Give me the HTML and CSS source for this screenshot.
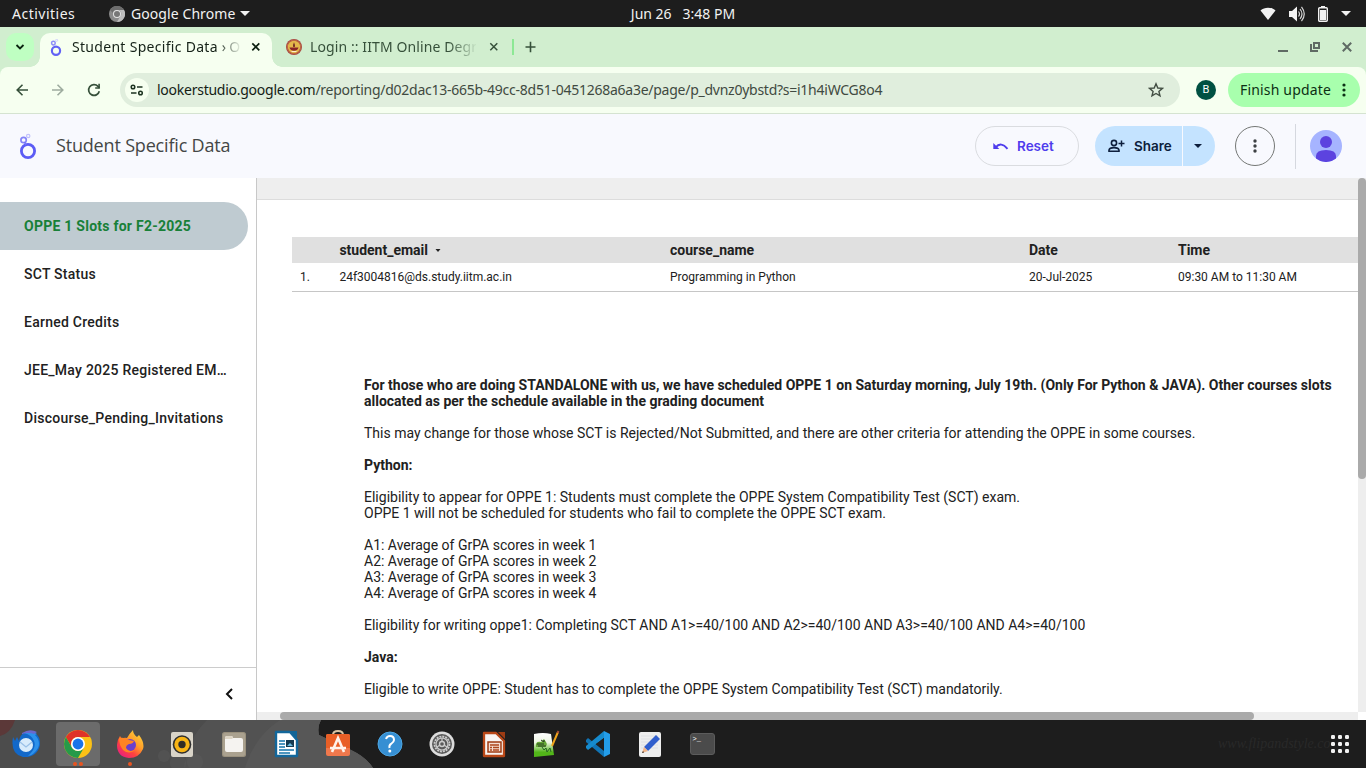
FILE: index.html
```html
<!DOCTYPE html>
<html lang="en">
<head>
<meta charset="utf-8">
<title>Student Specific Data</title>
<link rel="stylesheet" href="styles.css">
</head>
<body>
<div class="desktop">
  <div class="topbar">
    <div class="top-left">
      <span class="activities">Activities</span>
      <svg class="app-icon" width="16" height="16" viewBox="0 0 16 16"><circle cx="8" cy="8" r="8" fill="#8b8b8b"/><path d="M8 0a8 8 0 0 1 7 4H8a4 4 0 0 0-4 3L1 4a8 8 0 0 1 7-4z" fill="#6d6d6d"/><path d="M15 4a8 8 0 0 1-7 12l3.500-6A4 4 0 0 0 10 4z" fill="#bdbdbd"/><circle cx="8" cy="8" r="4" fill="#e4e4e4"/><circle cx="8" cy="8" r="3" fill="#777"/></svg>
      <span class="app-name">Google Chrome</span>
      <svg class="caret" width="10" height="5" viewBox="0 0 10 5"><path d="M0 0h10L5 5z" fill="#f2f2f2"/></svg>
    </div>
    <div class="clock">Jun 26 &nbsp; 3:48 PM</div>
    <div class="tray">
      <svg width="16" height="14" viewBox="0 0 16 14"><path d="M.5 3.500C4.500-.3 11.500-.3 15.500 3.500L8 13z" fill="#f2f2f2"/></svg>
      <svg width="16" height="16" viewBox="0 0 16 16"><path d="M0 5h3l5-4.500v15L3 11H0z" fill="#f2f2f2"/><path d="M9.500 5.500q2 2.500 0 5M11 3q4 5 0 10M12.500.8q5.500 7.200 0 14.400" fill="none" stroke="#d5d5d5" stroke-width="1.200"/></svg>
      <svg width="10" height="16" viewBox="0 0 10 16"><path d="M3 0h4v2H3z" fill="#f2f2f2"/><rect x=".7" y="1.700" width="8.600" height="13.600" rx="1" fill="none" stroke="#f2f2f2" stroke-width="1.400"/><path d="M2 4h6v10H2z" fill="#f2f2f2"/></svg>
      <svg width="10" height="5" viewBox="0 0 10 5"><path d="M0 0h10L5 5z" fill="#f2f2f2"/></svg>
    </div>
  </div>

  <div class="tabstrip">
    <div class="tab-search"><svg width="10" height="6" viewBox="0 0 10 6"><path d="M1.500 1L5 4.500 8.500 1" fill="none" stroke="#0a2410" stroke-width="1.800"/></svg></div>
    <div class="tab active">
      <svg class="fav looker" width="12" height="17" viewBox="0 0 16 26"><circle cx="8" cy="18" r="6.300" fill="none" stroke="#6262f5" stroke-width="3.300"/><circle cx="4" cy="6.300" r="2.800" fill="none" stroke="#8e8ef8" stroke-width="2.200"/><circle cx="9" cy="2" r="1.600" fill="none" stroke="#c7c7ff" stroke-width="1.200"/></svg>
      <span class="tab-title t1">Student Specific Data <span class="crumb">›</span> O</span>
      <svg class="close" width="10" height="10" viewBox="0 0 10 10"><path d="M1.300 1.300l7 7M8.300 1.300l-7 7" stroke="#0c1f10" stroke-width="1.700"/></svg>
    </div>
    <div class="tab second">
      <svg class="fav" width="16" height="16" viewBox="0 0 16 16"><circle cx="8" cy="8" r="8" fill="#a4403f"/><circle cx="8" cy="8" r="6.200" fill="#e3b64a"/><circle cx="8" cy="8" r="6.900" fill="none" stroke="#d2894a" stroke-width=".6"/><path d="M3.500 8.500h9q-1 3.200-4.500 3.200T3.500 8.500z" fill="#8a2326"/><path d="M8 3.300q1.500 3 .8 4.700H7.200Q6.500 6.300 8 3.300z" fill="#742a27"/><path d="M5.500 12.500h5" stroke="#fff0ce"/></svg>
      <span class="tab-title t2">Login :: IITM Online Degr</span>
      <svg class="close" width="10" height="10" viewBox="0 0 10 10"><path d="M1.300 1.300l7 7M8.300 1.300l-7 7" stroke="#36503a" stroke-width="1.500"/></svg>
    </div>
    <div class="tab-sep"></div>
    <svg class="newtab" width="12" height="12" viewBox="0 0 12 12"><path d="M5.500.7v10.600M.5 6h10" stroke="#36503a" stroke-width="1.600"/></svg>
    <div class="win-controls">
      <svg width="10" height="12" viewBox="0 0 10 12"><path d="M0 10h10" stroke="#5f6a64" stroke-width="2"/></svg>
      <svg width="10" height="10" viewBox="0 0 10 10"><path d="M4 1h5v5H4z M1 2v7h7" fill="none" stroke="#5f6a64" stroke-width="2"/></svg>
      <svg width="10" height="10" viewBox="0 0 10 10"><path d="M.8.800l8.400 8.400M9.200.800L.8 9.200" stroke="#5f6a64" stroke-width="2"/></svg>
    </div>
  </div>

  <div class="toolbar">
    <svg width="12" height="12" viewBox="0 0 12 12"><path d="M12 6H1.500M6.500.7L1.200 6l5.300 5.300" fill="none" stroke="#36503a" stroke-width="1.600"/></svg>
    <svg class="fwd" width="12" height="12" viewBox="0 0 12 12"><path d="M0 6h10.500M5.500.7L10.800 6l-5.300 5.300" fill="none" stroke="#9eac9f" stroke-width="1.600"/></svg>
    <svg class="reload" width="14" height="14" viewBox="0 0 14 14"><path d="M12.300 8.300A5.400 5.400 0 1 1 11 3.300l1.500 1.500" fill="none" stroke="#36503a" stroke-width="1.700"/><path d="M12.900.8v5H8.200V4.200h3.100V.8z" fill="#36503a"/></svg>
    <div class="omnibox">
      <div class="site-info"><svg width="14" height="12" viewBox="0 0 14 12"><circle cx="3" cy="3" r="1.800" fill="none" stroke="#1c3320" stroke-width="1.500"/><circle cx="10.500" cy="9" r="1.800" fill="none" stroke="#1c3320" stroke-width="1.500"/><path d="M7 3h5.500M1 9h5.500" stroke="#1c3320" stroke-width="1.500"/></svg></div>
      <span class="url"><b>lookerstudio.google.com</b>/reporting/d02dac13-665b-49cc-8d51-0451268a6a3e/page/p_dvnz0ybstd?s=i1h4iWCG8o4</span>
      <svg class="star" width="16" height="16" viewBox="0 0 16 16"><path d="M8 1.800l1.800 4.200 4.600.4-3.500 3 1.100 4.500L8 11.500l-4 2.400 1.100-4.500-3.500-3L6.200 6z" fill="none" stroke="#424e43" stroke-width="1.400"/></svg>
    </div>
    <div class="profile">B</div>
    <div class="update"><span>Finish update</span><svg width="4" height="14" viewBox="0 0 4 14"><g fill="#0c3014"><circle cx="2" cy="2" r="1.600"/><circle cx="2" cy="7" r="1.600"/><circle cx="2" cy="12" r="1.600"/></g></svg></div>
  </div>

  <header class="app-header">
    <svg class="logo" width="16" height="26" viewBox="0 0 16 26"><circle cx="8" cy="18" r="6.600" fill="none" stroke="#5c5cf5" stroke-width="2.800"/><circle cx="3.600" cy="7" r="2.700" fill="none" stroke="#8585f8" stroke-width="1.700"/><path d="M4.500 9l1.500 3" stroke="#7373f7" stroke-width="1.500"/><circle cx="8.200" cy="3" r="1.700" fill="none" stroke="#c1c1fc" stroke-width="1.200"/></svg>
    <h1>Student Specific Data</h1>
    <div class="reset"><svg width="16" height="9" viewBox="0 0 16 9"><path d="M2.500 5.500Q8-1 14.500 6.800" fill="none" stroke="#4f3ded" stroke-width="1.900"/><path d="M.3 1v6h6z" fill="#4f3ded"/></svg><span>Reset</span></div>
    <div class="share">
      <div class="share-main"><svg width="17" height="14" viewBox="0 0 17 14"><circle cx="6" cy="4" r="2.600" fill="none" stroke="#0d1e3c" stroke-width="1.600"/><path d="M1 12.200v-1Q1.500 8.600 6 8.600t5 2.600v1z" fill="none" stroke="#0d1e3c" stroke-width="1.600"/><path d="M13.500 1.500v6M10.500 4.500h6" stroke="#0d1e3c" stroke-width="1.500"/></svg><span>Share</span></div>
      <div class="share-drop"><svg width="8" height="4" viewBox="0 0 8 4"><path d="M0 0h8L4 4z" fill="#0d1e3c"/></svg></div>
    </div>
    <div class="more"><svg width="4" height="14" viewBox="0 0 4 14"><g fill="#3c4043"><circle cx="2" cy="2" r="1.700"/><circle cx="2" cy="7" r="1.700"/><circle cx="2" cy="12" r="1.700"/></g></svg></div>
    <div class="divider"></div>
    <svg class="avatar" width="32" height="32" viewBox="0 0 32 32"><circle cx="16" cy="16" r="16" fill="#a6b4ff"/><circle cx="16" cy="12" r="6" fill="#5c43df"/><path d="M6 28.500v-2.500Q6 20 16 20t10 6v2.500A16 16 0 0 1 6 28.500z" fill="#5c43df"/></svg>
  </header>

  <main class="workspace">
    <nav class="sidebar">
      <ul>
        <li class="selected">OPPE 1 Slots for F2-2025</li>
        <li>SCT Status</li>
        <li>Earned Credits</li>
        <li>JEE_May 2025 Registered EM…</li>
        <li>Discourse_Pending_Invitations</li>
      </ul>
      <div class="collapse"><svg width="8" height="12" viewBox="0 0 8 12"><path d="M7 1L2 6l5 5" fill="none" stroke="#111" stroke-width="2"/></svg></div>
    </nav>
    <section class="canvas">
      <div class="report">
        <div class="table">
          <div class="row head"><span></span><span>student_email <svg width="6" height="4" viewBox="0 0 6 4"><path d="M.5 0h5L3 3z" fill="#222"/></svg></span><span>course_name</span><span>Date</span><span>Time</span></div>
          <div class="row"><span class="num">1.</span><span>24f3004816@ds.study.iitm.ac.in</span><span>Programming in Python</span><span>20-Jul-2025</span><span>09:30 AM to 11:30 AM</span></div>
        </div>
        <div class="notes"><b>For those who are doing STANDALONE with us, we have scheduled OPPE 1 on Saturday morning, July 19th. (Only For Python &amp; JAVA). Other courses slots<br>allocated as per the schedule available in the grading document</b><br><br>This may change for those whose SCT is Rejected/Not Submitted, and there are other criteria for attending the OPPE in some courses.<br><br><b>Python:</b><br><br>Eligibility to appear for OPPE 1: Students must complete the OPPE System Compatibility Test (SCT) exam.<br>OPPE 1 will not be scheduled for students who fail to complete the OPPE SCT exam.<br><br>A1: Average of GrPA scores in week 1<br>A2: Average of GrPA scores in week 2<br>A3: Average of GrPA scores in week 3<br>A4: Average of GrPA scores in week 4<br><br>Eligibility for writing oppe1: Completing SCT AND A1&gt;=40/100 AND A2&gt;=40/100 AND A3&gt;=40/100 AND A4&gt;=40/100<br><br><b>Java:</b><br><br>Eligible to write OPPE: Student has to complete the OPPE System Compatibility Test (SCT) mandatorily.</div>
      </div>
      <div class="vscroll"><div class="vthumb"></div></div>
      <div class="hscroll"><div class="hthumb"></div></div>
      <div class="corner"></div>
    </section>
  </main>

  <footer class="dock">
    <svg class="wallpaper" width="1366" height="48" viewBox="0 0 1366 48"><rect width="1366" height="48" fill="#1d1d1d"/><path d="M0 0h321q-4 7-2 15l32 15q15 7 22 18H0z" fill="#4c4c4c"/><path d="M207 0h114q-4 7-2 15l32 15q15 7 22 18H184q3-28 23-48z" fill="#525252"/><path d="M280 0h41q-4 7-2 15l32 15q15 7 22 18H245q9-31 35-48z" fill="#575757"/><path d="M0 0h15Q11 13 0 16z" fill="#5b3838"/><g fill="#626262" opacity=".3"><circle cx="164" cy="36" r="6"/><circle cx="178" cy="43" r="8"/><circle cx="195" cy="42" r="8"/></g></svg>
    <div class="slot"><svg width="28" height="28" viewBox="0 0 28 28"><path d="M1 7Q-2 24 11 27q14 1 17-12 .5-8-4-11Q18-1 12 3 8 5 7 11L5 7 3 11z" fill="#1268c9"/><path d="M12 3q7-3 13 1l-2 1q6 6 3 13-4 7-10 8 9-8 6-15-2-6-10-8z" fill="#2c91ec"/><path d="M10 3q8-5 15-1l-3 2q-5-2-12 0z" fill="#6968cf"/><circle cx="14" cy="15" r="7" fill="#d7ebfb"/><path d="M8 12l6 5 6-5" fill="none" stroke="#9ac1e7" stroke-width="1.300"/></svg></div>
    <div class="slot current"><svg width="28" height="28" viewBox="0 0 28 28"><circle cx="14" cy="14" r="14" fill="#fbc116"/><path d="M1.880 7A14 14 0 0 1 26.120 7H14a7 7 0 0 0-6.060 10.500z" fill="#df3328"/><path d="M1.880 7A14 14 0 0 0 14 28l6.060-10.500a7 7 0 0 1-12.120 0z" fill="#269a49"/><circle cx="14" cy="14" r="7" fill="#fff"/><circle cx="14" cy="14" r="5.400" fill="#1a73e8"/></svg><i class="dot left"></i><i class="dot right"></i></div>
    <div class="slot"><svg width="28" height="28" viewBox="0 0 28 28"><defs><linearGradient id="fx" x1="1" x2=".2" y2="1"><stop stop-color="#ffe63e"/><stop offset=".45" stop-color="#ff9b29"/><stop offset=".7" stop-color="#ff433e"/><stop offset="1" stop-color="#e91e80"/></linearGradient></defs><path d="M17 0q0 4 4 7l2-2q6 8 4 14-4 9-14 9Q1 27 1 15q0-5 3-9l2 3q2-2 5-1 3-5 6-8z" fill="url(#fx)"/><circle cx="14" cy="15" r="6" fill="#6940cb"/><path d="M3 8q6-1 10 2l5 1q-1 3-5 3-3 1-3 4 3 5 9 2-6 5-12 0-4-5-4-12z" fill="#ff8424"/></svg><i class="dot"></i></div>
    <div class="slot"><svg width="28" height="28" viewBox="0 0 28 28"><rect x="3" y="2" width="22" height="25" rx="2" fill="#d9d4c8"/><circle cx="14" cy="14.500" r="9.300" fill="#2f2f2f"/><circle cx="14" cy="14.500" r="5.700" fill="none" stroke="#f8b414" stroke-width="4"/><circle cx="14" cy="14.500" r="2.500" fill="#322c20"/></svg></div>
    <div class="slot"><svg width="28" height="28" viewBox="0 0 28 28"><rect x="2" y="2" width="24" height="25" rx="2.500" fill="#99907d"/><rect x="3" y="3" width="22" height="23" rx="2" fill="#aaa18f"/><path d="M5 8q0-2 2-2h4q2 0 2 2h8q2 0 2 2v10q0 2-2 2H7q-2 0-2-2z" fill="#f5f3f0"/><path d="M5 9V8q0-2 2-2h4q2 0 2 2l-1 1z" fill="#ded6c6"/></svg></div>
    <div class="slot"><svg width="28" height="28" viewBox="0 0 28 28"><path d="M4 2h14l7 8v16H4z" fill="#fff" stroke="#13679b" stroke-width="2.400" stroke-linejoin="round"/><path d="M18 1h7v8z" fill="#126496"/><path d="M7 11h6M7 14h6M7 17h6M7 20h15M7 23h11" stroke="#1474aa" stroke-width="1.500"/><path d="M14 10h8v7h-8z" fill="#163a50"/><path d="M15 16l3-3 3 3z" fill="#69b8dd"/></svg></div>
    <div class="slot"><svg width="28" height="28" viewBox="0 0 28 28"><path d="M9 5q0-4 5-4t5 4" fill="none" stroke="#d9c4a4" stroke-width="2"/><rect x="2" y="4" width="24" height="22" rx="2" fill="#f0784c"/><path d="M2 6q0-2 2-2h20q2 0 2 2v12H2z" fill="#e95f26"/><path d="M8 22l6-14 6 14M6 18h16" fill="none" stroke="#fff3eb" stroke-width="2.600"/></svg></div>
    <div class="slot"><svg width="28" height="28" viewBox="0 0 28 28"><circle cx="14" cy="14" r="12" fill="#368fd3" stroke="#4da7e3"/><path d="M10 9q1-3 4-3 4 0 4 4 0 2-3 4-2 1-1.500 4" fill="none" stroke="#fff" stroke-width="2"/><circle cx="13.800" cy="21" r="1.500" fill="#fff"/></svg></div>
    <div class="slot"><svg width="28" height="28" viewBox="0 0 28 28"><circle cx="14" cy="14" r="12.500" fill="#ddd"/><circle cx="14" cy="14" r="10" fill="#5a5a5a"/><circle cx="14" cy="14" r="7.500" fill="none" stroke="#ccc" stroke-width="1.800" stroke-dasharray="2 .95"/><circle cx="14" cy="14" r="6" fill="none" stroke="#ccc" stroke-width="1.200"/><circle cx="14" cy="14" r="2.500" fill="none" stroke="#ccc" stroke-width="1.400"/><path d="M14 8v4M9 17l3-2M19 17l-3-2" stroke="#ccc" stroke-width="1.200"/></svg></div>
    <div class="slot"><svg width="28" height="28" viewBox="0 0 28 28"><path d="M4 3h12l8 8v15H4z" fill="#f8f5f3" stroke="#b94818" stroke-width="2.300" stroke-linejoin="round"/><path d="M18 2h7v7z" fill="#9d3b13"/><rect x="8" y="12" width="13" height="10" fill="#f5ded2" stroke="#9e3b13" stroke-width="1.500"/><path d="M10 15h9M10 17.500h2m1 0h6M10 20h2m1 0h6" stroke="#ad471c" stroke-width="1.400"/></svg></div>
    <div class="slot"><svg width="28" height="28" viewBox="0 0 28 28"><defs><linearGradient id="np" y2="1" x2="0"><stop stop-color="#fff"/><stop offset=".4" stop-color="#edf5e2"/><stop offset=".8" stop-color="#52b619"/></linearGradient></defs><path d="M2 4q9-2 17 0l3 21-20 2z" fill="url(#np)"/><path d="M4 17q-1-6 5-5l3-3 2 3q2 3-1 5z" fill="#66a936"/><path d="M5 14h7m-6 2h8M9 10l3 2m-1-1h2" stroke="#263c22"/><path d="M10 17l2 3 2-2 1 4 3-4 1 4" fill="none" stroke="#286624"/><path d="M26 2l-6 14" stroke="#f0a41b" stroke-width="2"/><path d="M26.500 1l-1 2" stroke="#a64b35" stroke-width="2"/></svg></div>
    <div class="slot"><svg width="28" height="28" viewBox="0 0 28 28"><path d="M2 10l2-2 16 13v6L2 12z" fill="#1174b5"/><path d="M2 18l2 2L20 8V1L2 16z" fill="#168bce"/><path d="M20 1l6 3v20l-6 3z" fill="#239dea"/><path d="M20 8l-8 6 8 6z" fill="#202020"/></svg></div>
    <div class="slot"><svg width="28" height="28" viewBox="0 0 28 28"><rect x="3" y="2" width="22" height="25" rx="2" fill="#eee"/><path d="M5 6h17M5 9h17M5 12h17M5 15h17M5 18h17" stroke="#d9dce1" stroke-width=".8"/><path d="M20 5l4 4L12 21l-4-4z" fill="#315fcd"/><path d="M8 17l4 4-6 2z" fill="#f2b589"/><path d="M7 21l-1 2 2-.5z" fill="#222"/></svg></div>
    <div class="slot"><div class="terminal">&gt;_</div></div>
    <span class="watermark">www.flipandstyle.co</span>
    <svg class="apps" width="18" height="18" viewBox="0 0 18 18"><g fill="#f2f2f2"><rect width="4" height="4" rx="1.200"/><rect x="7" width="4" height="4" rx="1.200"/><rect x="14" width="4" height="4" rx="1.200"/><rect y="7" width="4" height="4" rx="1.200"/><rect x="7" y="7" width="4" height="4" rx="1.200"/><rect x="14" y="7" width="4" height="4" rx="1.200"/><rect y="14" width="4" height="4" rx="1.200"/><rect x="7" y="14" width="4" height="4" rx="1.200"/><rect x="14" y="14" width="4" height="4" rx="1.200"/></g></svg>
  </footer>
</div>
</body>
</html>
```
FILE: styles.css
```css
* { box-sizing: border-box; }
body { margin: 0; overflow: hidden; font-family: Roboto, "Liberation Sans", sans-serif; }
svg { display: block; flex: none; }
.desktop { width: 1366px; height: 768px; display: flex; flex-direction: column; overflow: hidden; background: #d1eecf; }

/* system bar */
.topbar { height: 27px; flex: none; background: #1d1d1d; color: #f2f2f2; display: grid; grid-template-columns: 1fr auto 1fr; align-items: center; font: 14px/27px "Noto Sans", sans-serif; white-space: nowrap; }
.top-left { display: flex; align-items: center; padding-left: 12px; }
.activities { width: 97px; letter-spacing: .5px; }
.app-name { margin-left: 6px; width: 109px; letter-spacing: .08px; }
.tray { display: flex; align-items: center; justify-content: flex-end; padding-right: 15px; gap: 13px; }

/* tabs */
.tabstrip { height: 40px; flex: none; background: #d1eecf; display: flex; align-items: center; font: 14px/20px "Noto Sans", sans-serif; white-space: nowrap; }
.tab-search { width: 28px; height: 28px; margin-left: 6px; border-radius: 10px; background: #bfffc2; display: flex; align-items: center; justify-content: center; }
.tab { display: flex; align-items: center; height: 34px; }
.tab.active { position: relative; width: 232px; margin-left: 6px; margin-top: 6px; padding: 0 11px 6px 10px; border-radius: 10px 10px 0 0; background: #f6fff0; }
.tab.active::before, .tab.active::after { content: ""; position: absolute; bottom: 0; width: 10px; height: 10px; }
.tab.active::before { left: -10px; background: radial-gradient(circle at 0 0, transparent 9.5px, #f6fff0 10px); }
.tab.active::after { right: -10px; background: radial-gradient(circle at 100% 0, transparent 9.5px, #f6fff0 10px); }
.tab-title { flex: none; }
.t1 { width: 168px; margin-left: 10px; letter-spacing: .3px; color: #152218; -webkit-mask-image: linear-gradient(90deg, #000 145px, transparent 170px); mask-image: linear-gradient(90deg, #000 145px, transparent 170px); }
.crumb { margin: 0 -1px 0 0; }
.t2 { width: 166px; margin-left: 8px; letter-spacing: .1px; color: #36503a; -webkit-mask-image: linear-gradient(90deg, #000 138px, transparent 168px); mask-image: linear-gradient(90deg, #000 138px, transparent 168px); }
.tab .close { margin-left: 11px; }
.second { margin-left: 14px; }
.second .close { margin-left: 13px; }
.tab-sep { width: 2px; height: 16px; background: #8de895; margin-left: 13px; }
.newtab { margin-left: 11px; }
.win-controls { margin-left: auto; padding-right: 14px; display: flex; align-items: center; gap: 22px; }

/* browser toolbar */
.toolbar { height: 47px; flex: none; background: #f6fff0; border-radius: 8px 8px 0 0; border-bottom: 1px solid #d5e3d1; display: flex; align-items: center; padding-left: 16px; }
.fwd { margin-left: 24px; }
.reload { margin-left: 23px; }
.omnibox { margin-left: 19px; width: 1060px; height: 34px; border-radius: 17px; background: #e0eedd; display: flex; align-items: center; padding: 0 16px 0 5px; }
.site-info { width: 24px; height: 24px; border-radius: 12px; background: #f6fff0; display: flex; align-items: center; justify-content: center; }
.url { margin-left: 8px; font: 14px/20px "Noto Sans", sans-serif; letter-spacing: -.255px; white-space: nowrap; color: #404a41; }
.url b { font-weight: 400; color: #141c15; }
.star { margin-left: auto; }
.profile { width: 20px; height: 20px; margin-left: 16px; border-radius: 50%; background: #005142; color: #fff; font: 11px/20px Roboto, sans-serif; text-align: center; }
.update { width: 132px; height: 34px; margin-left: 12px; border-radius: 17px; background: #a8ffad; color: #0c3014; display: flex; align-items: center; padding: 0 14px 0 12px; justify-content: space-between; font: 14px/20px "Noto Sans", sans-serif; letter-spacing: .17px; white-space: nowrap; }

/* report header */
.app-header { height: 64px; flex: none; background: #f8f9fe; display: flex; align-items: center; padding-left: 20px; }
.app-header h1 { margin: -2px 0 0 20px; font: 400 18px/24px "Open Sans", sans-serif; letter-spacing: -.18px; color: #444746; white-space: nowrap; }
.reset { margin-left: auto; width: 104px; height: 40px; border: 1px solid #dadce0; border-radius: 20px; color: #4f3ded; display: flex; align-items: center; padding-left: 17px; gap: 8px; font: 600 13.5px/20px Inter, sans-serif; }
.share { margin-left: 16px; width: 120px; height: 40px; border-radius: 20px; overflow: hidden; display: flex; gap: 1px; font: 600 13.5px/20px Inter, sans-serif; color: #0d1e3c; }
.share > div { background: #c4e3ff; display: flex; align-items: center; }
.share-main { width: 87px; padding-left: 13px; gap: 9px; }
.share-drop { width: 32px; padding-left: 11px; }
.more { margin-left: 20px; width: 40px; height: 40px; border-radius: 20px; border: 1px solid #747775; display: flex; align-items: center; justify-content: center; }
.divider { width: 1px; height: 45px; margin-left: 20px; background: #d5d8df; }
.avatar { margin: 0 24px 0 14px; }

/* workspace */
.workspace { height: 542px; flex: none; display: flex; }
.sidebar { width: 257px; border-right: 1px solid #c8c8c8; background: #fff; display: flex; flex-direction: column; justify-content: space-between; }
.sidebar ul { list-style: none; margin: 24px 0 0; padding: 0; }
.sidebar li { width: 248px; height: 48px; padding-left: 24px; font: 500 14px/48px Roboto, sans-serif; letter-spacing: .25px; color: #212121; white-space: nowrap; }
.sidebar .selected { background: #bfcbd1; color: #188038; border-radius: 0 24px 24px 0; font-weight: 700; }
.collapse { height: 53px; border-top: 1px solid #ccc; display: flex; justify-content: flex-end; align-items: center; padding-right: 23px; }
.canvas { width: 1109px; display: grid; grid-template-columns: 1101px 8px; grid-template-rows: 534px 8px; background: #eee; }
.report { margin-top: 21px; border-top: 1px solid #dcdcdc; background: #fff; padding: 37px 0 0 35px; overflow: hidden; color: #212121; }
.row { display: grid; grid-template-columns: 47.400px 330.600px 359px 149px 1fr; align-items: center; height: 29px; border-bottom: 1px solid #c6c6c6; font: 12px/16px Roboto, sans-serif; }
.row.head { height: 26px; background: #e0e0e0; border: 0; font-weight: 700; font-size: 14px; }
.row.head svg { display: inline-block; margin-left: 4px; vertical-align: 2px; }
.num { padding-left: 8px; }
.notes { margin: 85px 0 0 72px; font: 14px/16px Roboto, sans-serif; white-space: nowrap; }
.vthumb { height: 301px; border-radius: 4px; background: #aaa; }
.hthumb { height: 8px; width: 974px; margin-left: 23px; border-radius: 4px; background: #aaa; }
.corner { background: #fff; }

/* dock */
.dock { position: relative; height: 48px; flex: none; display: flex; align-items: center; background: #1d1d1d; }
.wallpaper { position: absolute; inset: 0; }
.slot { position: relative; width: 44px; height: 44px; margin: 0 4px; border-radius: 4px; display: flex; align-items: center; justify-content: center; }
.current { background: #6b6b6b; }
.dot { position: absolute; bottom: 0; left: 20px; width: 4px; height: 4px; border-radius: 50%; background: #e95420; }
.dot.left { left: 17px; }
.dot.right { left: 23px; }
.terminal { width: 25px; height: 22px; border-radius: 3px; background: #4b4b4b; border: 1px solid #5c5c5c; color: #fff; font: 7px/9px "Liberation Mono", monospace; padding: 1px 2px; }
.watermark { position: relative; margin-left: auto; width: 113px; font: italic 14px/20px "Liberation Serif", serif; color: #292929; white-space: nowrap; }
.apps { position: relative; margin-right: 17px; }
```
